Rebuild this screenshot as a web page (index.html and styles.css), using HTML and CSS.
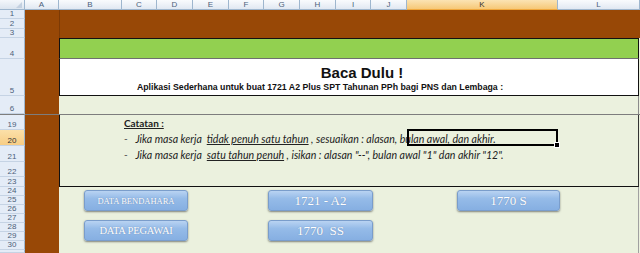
FILE: index.html
```html
<!DOCTYPE html>
<html lang="id">
<head>
  <meta charset="UTF-8">
  <meta name="viewport" content="width=device-width, initial-scale=1.0">
  <title>Baca Dulu</title>
  <link rel="stylesheet" href="styles.css">
</head>
<body>
  <div class="sheet">
    <div class="corner"><span class="corner-tri"></span></div>
    <div class="col-head">A</div>
    <div class="col-head">B</div>
    <div class="col-head">C</div>
    <div class="col-head">D</div>
    <div class="col-head">E</div>
    <div class="col-head">F</div>
    <div class="col-head">G</div>
    <div class="col-head">H</div>
    <div class="col-head">I</div>
    <div class="col-head">J</div>
    <div class="col-head active">K</div>
    <div class="col-head">L</div>

    <div class="row-head">1</div>
    <div class="row-head">2</div>
    <div class="row-head">3</div>
    <div class="row-head">4</div>
    <div class="row-head">5</div>
    <div class="row-head">6</div>
    <div class="row-head frozen">19</div>
    <div class="row-head active">20</div>
    <div class="row-head">21</div>
    <div class="row-head">22</div>
    <div class="row-head">23</div>
    <div class="row-head">24</div>
    <div class="row-head">25</div>
    <div class="row-head">26</div>
    <div class="row-head">27</div>
    <div class="row-head">28</div>
    <div class="row-head">29</div>
    <div class="row-head">30</div>
    <div class="row-head"></div>

    <div class="brown-col"></div>
    <div class="brown-top"></div>
    <div class="green-bar"></div>

    <div class="title-cell">
      <div class="title">Baca Dulu !</div>
      <div class="subtitle">Aplikasi Sederhana untuk buat 1721 A2 Plus SPT Tahunan PPh bagi PNS dan Lembaga :</div>
    </div>

    <div class="pad-row"></div>

    <div class="notes">
      <div class="note-line"><span class="note-head">Catatan :</span></div>
      <div class="note-line"><span class="dash">-</span>&nbsp; Jika masa kerja&nbsp; <u>tidak penuh satu tahun</u> , sesuaikan : alasan, bulan awal, dan akhir.</div>
      <div class="note-line"><span class="dash">-</span>&nbsp; Jika masa kerja&nbsp; <u>satu tahun penuh</u> , isikan : alasan "--", bulan awal "1" dan akhir "12".</div>
    </div>

    <div class="selection"><span class="fill-handle"></span></div>
    <div class="freeze"></div>

    <div class="buttons">
      <div class="btn btn-small">DATA BENDAHARA</div>
      <div class="btn btn-num">1721 - A2</div>
      <div class="btn btn-num btn-right">1770 S</div>
      <div class="btn btn-mid">DATA PEGAWAI</div>
      <div class="btn btn-num">1770&nbsp;&nbsp;SS</div>
    </div>
  </div>
</body>
</html>
```

FILE: styles.css
```css
body {
  margin: 0;
  padding: 0;
  background-color: #ebf1de;
  font-family: 'Liberation Sans', Arial, sans-serif;
}
.sheet {
  display: grid;
  grid-template-columns: 25px 34px 63px 35px 36px 36px 35px 36px 36px 35px 36px 151px 1fr;
  grid-template-rows: 10px 9px 10px 9px 21px 37px 18px 16px 16px 16px 15px 10px repeat(7, 9px) 1fr;
  width: 640px;
  height: 253px;
  overflow: hidden;
  background-color: #ebf1de;
}
.corner {
  position: relative;
  background: linear-gradient(#f4f7fb, #dbe4ef);
  border-right: 1px solid #9eb6ce;
  border-bottom: 1px solid #9eb6ce;
}
.corner-tri {
  position: absolute;
  right: 2px;
  bottom: 1px;
  width: 0;
  height: 0;
  border-left: 6px solid transparent;
  border-bottom: 6px solid #c3d0e0;
}
.col-head {
  background: linear-gradient(#f9fbfd, #e1e8f2);
  border-right: 1px solid #9eb6ce;
  border-bottom: 1px solid #9eb6ce;
  color: #4c5f7a;
  font-size: 8px;
  line-height: 10px;
  text-align: center;
}
.col-head.active {
  background: linear-gradient(#fbe3b3, #f6c877);
  border-bottom-color: #f0a83e;
  color: #333;
}
.row-head {
  grid-column: 1;
  display: flex;
  align-items: flex-end;
  justify-content: center;
  box-sizing: border-box;
  background-color: #e4ecf7;
  border-right: 1px solid #9eb6ce;
  border-bottom: 1px solid #c5d3e4;
  color: #4c5f7a;
  font-size: 8px;
  line-height: 8px;
  overflow: hidden;
}
.row-head.frozen {
  border-top: 1px solid #7d7d7d;
}
.row-head.active {
  background: linear-gradient(#fbe0a9, #f7cd84);
  color: #333;
}
.brown-col {
  grid-column: 2;
  grid-row: 2 / -1;
  background-color: #984806;
}
.brown-top {
  grid-column: 3 / -1;
  grid-row: 2 / 5;
  background-color: #984806;
  border-left: 1px solid #7c3a05;
}
.green-bar {
  grid-column: 3 / -1;
  grid-row: 5;
  background-color: #92d050;
  border: 1px solid #111;
  border-bottom-color: #6f6f6f;
  margin-right: 1px;
}
.title-cell {
  grid-column: 3 / -1;
  grid-row: 6;
  display: flex;
  flex-direction: column;
  align-items: center;
  background-color: #fff;
  border-left: 1px solid #111;
  border-right: 1px solid #111;
  border-bottom: 1px solid #111;
  margin-right: 1px;
  color: #111;
  font-weight: bold;
}
.title {
  font-size: 15px;
  line-height: 16px;
  margin-top: 6px;
  padding-left: 26px;
}
.subtitle {
  font-size: 8.75px;
  line-height: 10px;
  margin-top: 1px;
  padding-right: 58px;
}
.pad-row {
  grid-column: 3 / -1;
  grid-row: 7;
  border-right: 1px solid #8a8a8a;
  margin-right: 1px;
}
.notes {
  grid-column: 3 / -1;
  grid-row: 8 / 13;
  border-left: 1px solid #111;
  border-right: 1px solid #333;
  border-bottom: 1px solid #111;
  margin-right: 1px;
  padding-left: 64px;
  font-family: Lato, 'Liberation Sans', sans-serif;
  font-size: 10.6px;
  color: #222;
}
.note-line {
  height: 16px;
  line-height: 16px;
  padding-top: 1px;
  box-sizing: border-box;
  font-style: italic;
  white-space: nowrap;
}
.note-head {
  font-style: normal;
  font-weight: bold;
  font-size: 10px;
  text-decoration: underline;
}
.dash {
  color: #666;
  margin-right: 3px;
}
.selection {
  grid-column: 12;
  grid-row: 9;
  position: relative;
  border: 2px solid #000;
  margin: -1px 0 0 0;
  z-index: 2;
}
.fill-handle {
  position: absolute;
  right: -4px;
  bottom: -4px;
  width: 4px;
  height: 4px;
  background-color: #000;
  border: 1px solid #fff;
}
.freeze {
  grid-column: 2 / -1;
  grid-row: 8;
  align-self: start;
  height: 0;
  border-top: 1px solid #7d7d7d;
  z-index: 3;
}
.buttons {
  grid-column: 3 / -1;
  grid-row: 13 / -1;
  display: grid;
  grid-template-columns: 104px 105px 107px;
  grid-template-rows: 21px 21px;
  column-gap: 80px;
  row-gap: 9px;
  padding: 3px 0 0 25px;
  border-right: 1px solid #a0a0a0;
  margin-right: 1px;
}
.btn {
  display: flex;
  align-items: center;
  justify-content: center;
  box-sizing: border-box;
  border: 1px solid #7a9dcb;
  border-radius: 3px;
  background: linear-gradient(#b9d3f2 0%, #95bbe8 40%, #86afe2 100%);
  box-shadow: 0 1px 2px rgba(40, 40, 40, 0.55);
  color: #fff;
  font-family: 'Liberation Serif', 'Times New Roman', serif;
  text-shadow: 0 0 1px rgba(60, 80, 120, 0.5);
  white-space: nowrap;
}
.btn-small {
  font-size: 8.5px;
}
.btn-mid {
  font-size: 10.5px;
  letter-spacing: -0.2px;
}
.btn-num {
  font-size: 13px;
}
.btn-right {
  width: 103px;
  justify-self: end;
}
```
